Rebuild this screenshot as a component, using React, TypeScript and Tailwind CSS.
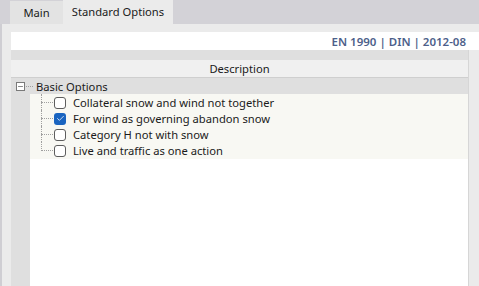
import { Check, Minus } from "lucide-react";

type Option = {
  label: string;
  checked: boolean;
};

const options: Option[] = [
  { label: "Collateral snow and wind not together", checked: false },
  { label: "For wind as governing abandon snow", checked: true },
  { label: "Category H not with snow", checked: false },
  { label: "Live and traffic as one action", checked: false },
];

function CheckBox({ checked }: { checked: boolean }) {
  if (checked) {
    return (
      <span className="block shrink-0 w-[12px] h-[12px] rounded-[3px] bg-[#1a64c0] flex items-center justify-center">
        <Check size={9} strokeWidth={2} className="text-white" />
      </span>
    );
  }
  return (
    <span className="block shrink-0 w-[12px] h-[12px] rounded-[3px] border border-[#5d5d5d] bg-white" />
  );
}

function OptionRow({ option, last }: { option: Option; last: boolean }) {
  return (
    <div className="h-[16px] flex items-center relative">
      <div
        className={
          last
            ? "absolute left-[11px] top-0 h-[9px] border-l border-dotted border-[#a0a0a0]"
            : "absolute left-[11px] top-0 h-[16px] border-l border-dotted border-[#a0a0a0]"
        }
      />
      <div className="ml-[11px] mt-[1px] w-[12px] shrink-0 border-t border-dotted border-[#a0a0a0]" />
      <span className="ml-[1px] mt-[1px]">
        <CheckBox checked={option.checked} />
      </span>
      <span className="ml-[7px] pt-[2px] text-[#1a1a1a] whitespace-nowrap">{option.label}</span>
    </div>
  );
}

export default function App() {
  return (
    <div
      className="w-[479px] h-[286px] flex flex-col bg-[#ebebeb] text-[11.2px] overflow-hidden"
      style={{ fontFamily: '"Noto Sans", "Open Sans", sans-serif' }}
    >
      <div className="h-[24px] bg-[#d3d2d7] flex items-end pl-[10px]">
        <div className="h-[23px] w-[53px] bg-[#e3e3e3] flex items-center justify-center pt-[1px] text-[#1a1a1a]">
          Main
        </div>
        <div className="h-[24px] w-[110px] bg-[#ebebeb] flex items-center justify-center pt-[1px] text-[#1a1a1a]">
          Standard Options
        </div>
      </div>

      <div className="flex-1 flex border-l-[2px] border-[#cfced3]">
        <div className="w-[9px]" />
        <div className="flex-1 flex flex-col pt-[8px]">
          <div className="h-[18px] bg-white flex items-center justify-end pr-[13px] pt-[1px] font-semibold text-[#4d5f8a] text-[11.5px]">
            EN 1990 | DIN | 2012-08
          </div>
          <div className="flex-1 flex mr-[10px] border-r border-[#d6d6d6]">
            <div className="flex-1 flex flex-col">
              <div className="h-[10px] bg-[#dfdfdf]" />
              <div className="h-[18px] bg-[#f0f0f0] border-b border-[#cfcfcf] flex items-center justify-center pt-[1px] text-[#1a1a1a]">
                Description
              </div>
              <div className="flex-1 flex">
                <div className="w-[19px] bg-[#dfdfdf]" />
                <div className="flex-1 flex flex-col bg-white">
                  <div className="h-[16px] bg-[#dfdfdf] flex items-center -ml-[19px] pl-[5px]">
                    <span className="block shrink-0 w-[9px] h-[9px] border border-[#7a7a7a] bg-white flex items-center justify-center">
                      <Minus size={7} strokeWidth={2} className="text-[#333]" />
                    </span>
                    <span className="block ml-[1px] w-[7px] border-t border-dotted border-[#a0a0a0]" />
                    <span className="ml-[3px] pt-[2px] text-[#1a1a1a]">Basic Options</span>
                  </div>
                  <div className="bg-[#f8f8f3] pb-[1px]">
                    {options.map((o, i) => (
                      <OptionRow key={o.label} option={o} last={i === options.length - 1} />
                    ))}
                  </div>
                </div>
              </div>
            </div>
          </div>
        </div>
      </div>
    </div>
  );
}
